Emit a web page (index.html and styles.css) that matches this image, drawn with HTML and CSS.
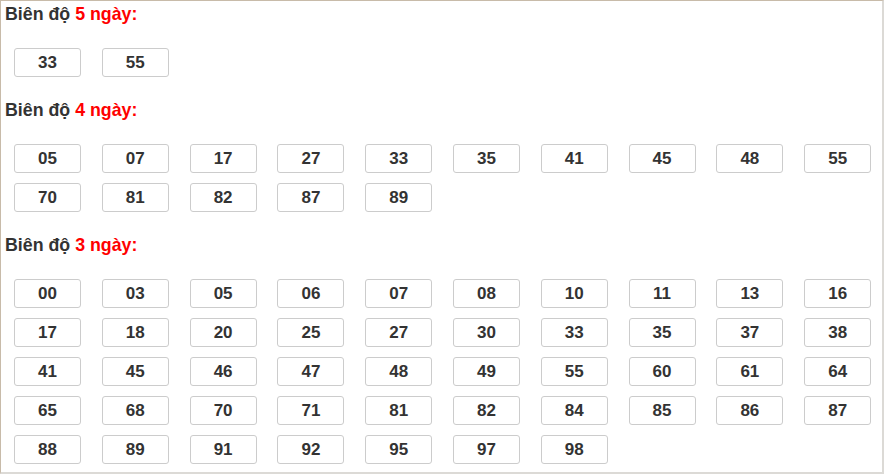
FILE: index.html
```html
<!DOCTYPE html>
<html lang="vi">
<head>
<meta charset="utf-8">
<link rel="stylesheet" href="styles.css">
</head>
<body>
<div class="panel">
  <div class="title">Biên độ <span class="hl">5 ngày:</span></div>
  <div class="grid">
    <div class="num">33</div><div class="num">55</div>
  </div>
  <div class="title">Biên độ <span class="hl">4 ngày:</span></div>
  <div class="grid">
    <div class="num">05</div><div class="num">07</div><div class="num">17</div><div class="num">27</div><div class="num">33</div><div class="num">35</div><div class="num">41</div><div class="num">45</div><div class="num">48</div><div class="num">55</div>
    <div class="num">70</div><div class="num">81</div><div class="num">82</div><div class="num">87</div><div class="num">89</div>
  </div>
  <div class="title">Biên độ <span class="hl">3 ngày:</span></div>
  <div class="grid">
    <div class="num">00</div><div class="num">03</div><div class="num">05</div><div class="num">06</div><div class="num">07</div><div class="num">08</div><div class="num">10</div><div class="num">11</div><div class="num">13</div><div class="num">16</div>
    <div class="num">17</div><div class="num">18</div><div class="num">20</div><div class="num">25</div><div class="num">27</div><div class="num">30</div><div class="num">33</div><div class="num">35</div><div class="num">37</div><div class="num">38</div>
    <div class="num">41</div><div class="num">45</div><div class="num">46</div><div class="num">47</div><div class="num">48</div><div class="num">49</div><div class="num">55</div><div class="num">60</div><div class="num">61</div><div class="num">64</div>
    <div class="num">65</div><div class="num">68</div><div class="num">70</div><div class="num">71</div><div class="num">81</div><div class="num">82</div><div class="num">84</div><div class="num">85</div><div class="num">86</div><div class="num">87</div>
    <div class="num">88</div><div class="num">89</div><div class="num">91</div><div class="num">92</div><div class="num">95</div><div class="num">97</div><div class="num">98</div>
  </div>
</div>
</body>
</html>
```

FILE: styles.css
```css
html, body {
  margin: 0;
  padding: 0;
  background: #fff;
}
.panel {
  width: 884px;
  height: 474px;
  box-sizing: border-box;
  border-top: 1px solid #c8bba9;
  border-left: 1px solid #c8bba9;
  border-right: 2px solid #dcdad6;
  border-bottom: 2px solid #dcdad6;
  font-family: "Liberation Sans", Arial, sans-serif;
  color: #333;
  overflow: hidden;
}
.title {
  font-weight: bold;
  font-size: 17.8px;
  line-height: 20px;
  padding: 3px 0 0 4px;
  height: 20px;
}
.hl {
  color: #f00;
}
.grid {
  display: grid;
  grid-template-columns: repeat(10, 67px);
  column-gap: 20.8px;
  row-gap: 10px;
  padding: 24px 0 0 13px;
  margin-bottom: 20px;
}
.num {
  height: 29px;
  box-sizing: border-box;
  border: 1px solid #ccc;
  border-radius: 3px;
  font-weight: bold;
  font-size: 17px;
  line-height: 27px;
  text-align: center;
  color: #333;
}
```
